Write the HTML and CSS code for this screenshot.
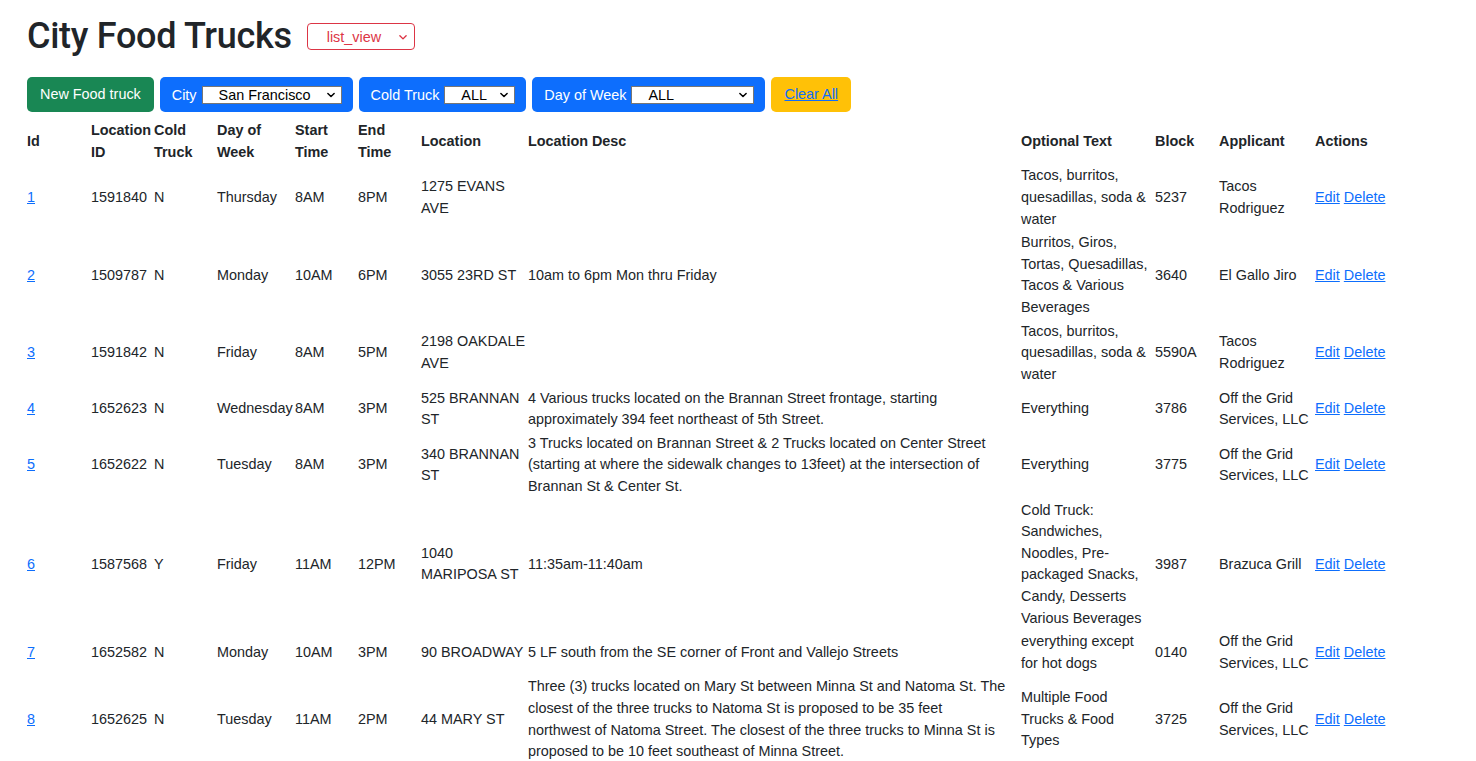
FILE: index.html
```html
<!DOCTYPE html>
<html lang="en">
<head>
<meta charset="utf-8">
<title>City Food Trucks</title>
<link rel="stylesheet" href="styles.css">
</head>
<body>
<div class="page">
  <div class="title-row">
    <h1 class="title">City Food Trucks</h1>
    <select class="view-select"><option>list_view</option></select>
  </div>

  <div class="toolbar">
    <button class="btn btn-green">New Food truck</button>
    <div class="filter"><span class="filter-label">City</span><select class="filter-select w-city"><option>San Francisco</option></select></div>
    <div class="filter"><span class="filter-label">Cold Truck</span><select class="filter-select w-cold"><option>ALL</option></select></div>
    <div class="filter"><span class="filter-label">Day of Week</span><select class="filter-select w-day"><option>ALL</option></select></div>
    <button class="btn btn-yellow"><a href="#" class="link">Clear All</a></button>
  </div>

  <table class="trucks">
    <colgroup>
      <col class="c-id"><col class="c-locid"><col class="c-cold"><col class="c-day"><col class="c-start"><col class="c-end"><col class="c-loc"><col class="c-desc"><col class="c-opt"><col class="c-block"><col class="c-app"><col class="c-act">
    </colgroup>
    <thead>
      <tr><th>Id</th><th>Location ID</th><th>Cold Truck</th><th>Day of Week</th><th>Start Time</th><th>End Time</th><th>Location</th><th class="desc">Location Desc</th><th>Optional Text</th><th>Block</th><th>Applicant</th><th>Actions</th></tr>
    </thead>
    <tbody>
      <tr><td><a href="#" class="link">1</a></td><td>1591840</td><td>N</td><td>Thursday</td><td>8AM</td><td>8PM</td><td>1275 EVANS AVE</td><td class="desc"></td><td>Tacos, burritos, quesadillas, soda &amp; water</td><td>5237</td><td>Tacos Rodriguez</td><td><a href="#" class="link">Edit</a> <a href="#" class="link">Delete</a></td></tr>
      <tr><td><a href="#" class="link">2</a></td><td>1509787</td><td>N</td><td>Monday</td><td>10AM</td><td>6PM</td><td>3055 23RD ST</td><td class="desc">10am to 6pm Mon thru Friday</td><td>Burritos, Giros, Tortas, Quesadillas, Tacos &amp; Various Beverages</td><td>3640</td><td>El Gallo Jiro</td><td><a href="#" class="link">Edit</a> <a href="#" class="link">Delete</a></td></tr>
      <tr><td><a href="#" class="link">3</a></td><td>1591842</td><td>N</td><td>Friday</td><td>8AM</td><td>5PM</td><td>2198 OAKDALE AVE</td><td class="desc"></td><td>Tacos, burritos, quesadillas, soda &amp; water</td><td>5590A</td><td>Tacos Rodriguez</td><td><a href="#" class="link">Edit</a> <a href="#" class="link">Delete</a></td></tr>
      <tr><td><a href="#" class="link">4</a></td><td>1652623</td><td>N</td><td>Wednesday</td><td>8AM</td><td>3PM</td><td>525 BRANNAN ST</td><td class="desc">4 Various trucks located on the Brannan Street frontage, starting approximately 394 feet northeast of 5th Street.</td><td>Everything</td><td>3786</td><td>Off the Grid Services, LLC</td><td><a href="#" class="link">Edit</a> <a href="#" class="link">Delete</a></td></tr>
      <tr><td><a href="#" class="link">5</a></td><td>1652622</td><td>N</td><td>Tuesday</td><td>8AM</td><td>3PM</td><td>340 BRANNAN ST</td><td class="desc">3 Trucks located on Brannan Street &amp; 2 Trucks located on Center Street (starting at where the sidewalk changes to 13feet) at the intersection of Brannan St &amp; Center St.</td><td>Everything</td><td>3775</td><td>Off the Grid Services, LLC</td><td><a href="#" class="link">Edit</a> <a href="#" class="link">Delete</a></td></tr>
      <tr><td><a href="#" class="link">6</a></td><td>1587568</td><td>Y</td><td>Friday</td><td>11AM</td><td>12PM</td><td>1040 MARIPOSA ST</td><td class="desc">11:35am-11:40am</td><td>Cold Truck: Sandwiches, Noodles, Pre-packaged Snacks, Candy, Desserts Various Beverages</td><td>3987</td><td>Brazuca Grill</td><td><a href="#" class="link">Edit</a> <a href="#" class="link">Delete</a></td></tr>
      <tr><td><a href="#" class="link">7</a></td><td>1652582</td><td>N</td><td>Monday</td><td>10AM</td><td>3PM</td><td>90 BROADWAY</td><td class="desc">5 LF south from the SE corner of Front and Vallejo Streets</td><td>everything except for hot dogs</td><td>0140</td><td>Off the Grid Services, LLC</td><td><a href="#" class="link">Edit</a> <a href="#" class="link">Delete</a></td></tr>
      <tr><td><a href="#" class="link">8</a></td><td>1652625</td><td>N</td><td>Tuesday</td><td>11AM</td><td>2PM</td><td>44 MARY ST</td><td class="desc">Three (3) trucks located on Mary St between Minna St and Natoma St. The closest of the three trucks to Natoma St is proposed to be 35 feet northwest of Natoma Street. The closest of the three trucks to Minna St is proposed to be 10 feet southeast of Minna Street.</td><td>Multiple Food Trucks &amp; Food Types</td><td>3725</td><td>Off the Grid Services, LLC</td><td><a href="#" class="link">Edit</a> <a href="#" class="link">Delete</a></td></tr>
    </tbody>
  </table>
</div>
</body>
</html>
```

FILE: styles.css
```css
* { box-sizing: border-box; }

body {
  margin: 0;
  font-family: "Liberation Sans", Arial, sans-serif;
  font-size: 14.4px;
  line-height: 1.5;
  color: #212529;
  background: #fff;
}

.page {
  padding: 15px 27px 0 27px;
}

.title-row {
  display: flex;
  align-items: center;
  gap: 15px;
}

.title {
  margin: 0;
  font-family: Roboto, "Liberation Sans", sans-serif;
  font-weight: 500;
  font-size: 36px;
  line-height: 1.2;
  letter-spacing: -0.3px;
  color: #212529;
}

.view-select {
  appearance: none;
  -webkit-appearance: none;
  width: 108px;
  height: 27px;
  padding: 0 0 0 19px;
  border: 1px solid #dc3545;
  border-radius: 4px;
  font-family: "Liberation Sans", Arial, sans-serif;
  font-size: 14.4px;
  color: #dc3545;
  background-color: #fff;
  background-image: url("data:image/svg+xml,%3csvg xmlns='http://www.w3.org/2000/svg' viewBox='0 0 16 16'%3e%3cpath fill='none' stroke='%23dc3545' stroke-linecap='round' stroke-linejoin='round' stroke-width='2.2' d='m3 6 5 5 5-5'/%3e%3c/svg%3e");
  background-repeat: no-repeat;
  background-position: right 6px center;
  background-size: 10px 10px;
}

.toolbar {
  display: flex;
  align-items: center;
  gap: 6px;
  margin-top: 19px;
  margin-bottom: 7px;
}

.btn {
  height: 35px;
  padding: 0 12px;
  border: none;
  border-radius: 5px;
  font-family: "Liberation Sans", Arial, sans-serif;
  font-size: 14.4px;
  line-height: 35px;
  color: #fff;
}

.btn-green { background: #198754; padding: 0 13px; }
.btn-yellow { background: #ffc107; padding: 0 13px; }

.filter {
  display: flex;
  align-items: center;
  gap: 5px;
  height: 35px;
  padding: 1px 11px 0 12px;
  border-radius: 5px;
  background: #0d6efd;
  color: #fff;
}

.filter-label { line-height: 18px; }

.filter-select {
  appearance: none;
  -webkit-appearance: none;
  height: 18px;
  padding: 0 0 0 16px;
  border: 1px solid #767676;
  border-radius: 0;
  background-color: #fff;
  background-image: url("data:image/svg+xml,%3csvg xmlns='http://www.w3.org/2000/svg' viewBox='0 0 16 16'%3e%3cpath fill='none' stroke='%23000' stroke-linecap='round' stroke-linejoin='round' stroke-width='2.4' d='m3 5.5 5 5 5-5'/%3e%3c/svg%3e");
  background-repeat: no-repeat;
  background-position: right 5px center;
  background-size: 10px 10px;
  font-family: "Liberation Sans", Arial, sans-serif;
  font-size: 14.4px;
  line-height: 16px;
  color: #000;
}

.w-city { width: 140px; }
.w-cold { width: 71px; }
.w-day { width: 123px; }

.link {
  color: #0d6efd;
  text-decoration: underline;
}

.trucks {
  width: 100%;
  table-layout: fixed;
  border-collapse: collapse;
}

.trucks th,
.trucks td {
  padding: 1px 2px 1px 0;
  text-align: left;
  vertical-align: middle;
}

.trucks th { font-weight: 700; }

.trucks td.desc { padding-right: 14px; }

.c-id { width: 64px; }
.c-locid { width: 63px; }
.c-cold { width: 63px; }
.c-day { width: 78px; }
.c-start { width: 63px; }
.c-end { width: 63px; }
.c-loc { width: 107px; }
.c-desc { width: 493px; }
.c-opt { width: 134px; }
.c-block { width: 64px; }
.c-app { width: 96px; }
.c-act { width: auto; }
```
